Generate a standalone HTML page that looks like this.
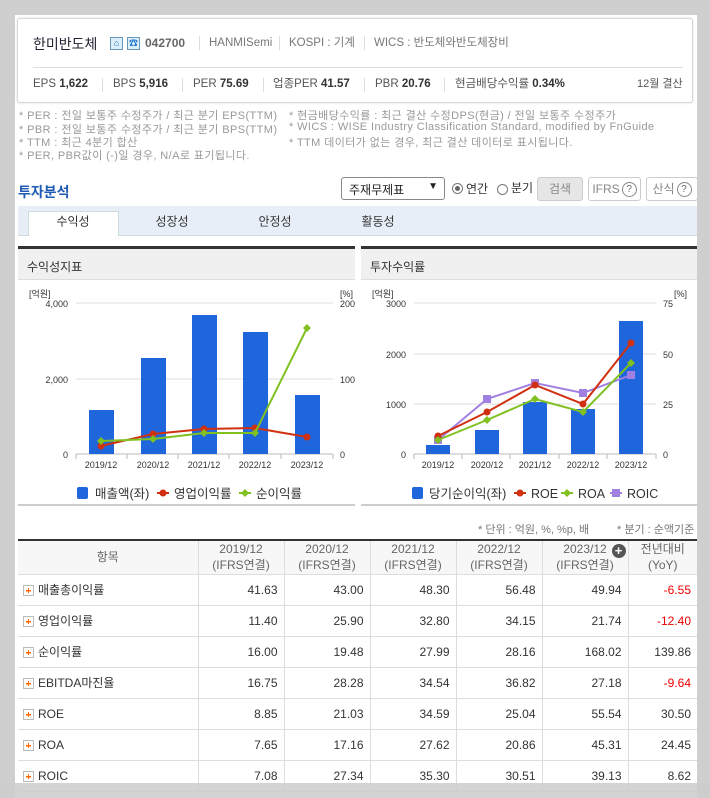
<!DOCTYPE html>
<html><head><meta charset="utf-8">
<style>
*{margin:0;padding:0;box-sizing:border-box}
body{width:710px;height:798px;background:#cfcfcf;font-family:"Liberation Sans","Noto Sans CJK KR",sans-serif;position:relative;overflow:hidden;color:#333}
.a{position:absolute;white-space:nowrap}
.wp{position:absolute;left:15px;top:15px;width:682px;height:783px;background:#fff}
.hdr{position:absolute;left:17px;top:18px;width:676px;height:85px;border:1px solid #d8d8d8;border-radius:3px;background:#fff;box-shadow:0 0 2px #ddd}
.g{color:#777;font-size:11.5px;line-height:14px}
.b{font-weight:bold;color:#333}
.sep{position:absolute;width:1px;height:14px;background:#ddd}
.note{position:absolute;font-size:11px;color:#999;white-space:nowrap;letter-spacing:0.4px}
.btn{position:absolute;top:177px;height:24px;border:1px solid #ccc;border-radius:3px;font-size:12px;color:#888;text-align:center;line-height:22px}
.q{display:inline-block;width:15px;height:15px;border:1px solid #888;border-radius:50%;font-size:10px;line-height:13px;color:#666;vertical-align:middle;margin-left:2px}
.tab{position:absolute;top:221px;font-size:12px;color:#333;transform:translate(-50%,-50%)}
.ph{position:absolute;top:246px;height:34px;background:#f0f0f0;border-top:3px solid #333;border-bottom:1px solid #ddd;font-size:12px;color:#333;padding:9px 0 0 9px}
table{position:absolute;left:18px;top:539px;width:679px;border-collapse:collapse;border-top:2px solid #333;font-size:12px}
td,th{border-right:1px solid #ddd;border-bottom:1px solid #ddd;height:31px}
th{background:#f7f7f7;font-weight:normal;color:#666;height:34px;line-height:16px;font-size:12px}
td{text-align:right;padding-right:6px;color:#333}
td.l{text-align:left;padding-left:5px}
.pl{display:inline-block;width:11px;height:11px;border:1px solid #bbb;vertical-align:middle;margin-right:4px;position:relative;background:#fff}
.pl:before{content:"";position:absolute;left:2px;top:4px;width:5px;height:1px;background:#f60;box-shadow:0 0.5px 0 #f60}
.pl:after{content:"";position:absolute;left:4px;top:2px;width:1px;height:5px;background:#f60}
.r{color:#e00}
</style></head><body>
<div class="wp"></div>
<div class="hdr"></div>
<div class="a" style="left:33px;top:34px;font-size:14px;color:#223">한미반도체</div>
<div class="a" style="left:110px;top:37px;width:13px;height:13px;border:1px solid #69b;background:#dbeefa;color:#27c;font-size:9px;text-align:center;line-height:11px">⌂</div>
<div class="a" style="left:127px;top:37px;width:13px;height:13px;border:1px solid #69b;background:#dbeefa;color:#27c;font-size:9px;text-align:center;line-height:11px">☎</div>
<div class="a" style="left:145px;top:36px;font-size:12px;font-weight:bold;color:#666">042700</div>
<div class="sep" style="left:199px;top:36px"></div>
<div class="a g" style="left:209px;top:36px">HANMISemi</div>
<div class="sep" style="left:279px;top:36px"></div>
<div class="a g" style="left:289px;top:36px">KOSPI : 기계</div>
<div class="sep" style="left:364px;top:36px"></div>
<div class="a g" style="left:374px;top:36px">WICS : 반도체와반도체장비</div>
<div class="a" style="left:33px;top:67px;width:650px;height:1px;background:#ddd"></div>
<div class="a" style="left:33px;top:77px;font-size:11.5px;color:#555;line-height:14px">EPS <span class="b">1,622</span></div>
<div class="sep" style="left:102px;top:78px"></div>
<div class="a" style="left:113px;top:77px;font-size:11.5px;color:#555;line-height:14px">BPS <span class="b">5,916</span></div>
<div class="sep" style="left:182px;top:78px"></div>
<div class="a" style="left:193px;top:77px;font-size:11.5px;color:#555;line-height:14px">PER <span class="b">75.69</span></div>
<div class="sep" style="left:263px;top:78px"></div>
<div class="a" style="left:273px;top:77px;font-size:11.5px;color:#555;line-height:14px">업종PER <span class="b">41.57</span></div>
<div class="sep" style="left:364px;top:78px"></div>
<div class="a" style="left:375px;top:77px;font-size:11.5px;color:#555;line-height:14px">PBR <span class="b">20.76</span></div>
<div class="sep" style="left:444px;top:78px"></div>
<div class="a" style="left:455px;top:77px;font-size:11.5px;color:#555;line-height:14px">현금배당수익률 <span class="b">0.34%</span></div>
<div class="a" style="left:637px;top:77px;font-size:11px;color:#555;line-height:14px">12월 결산</div>

<div class="note" style="left:19px;top:107px">* PER : 전일 보통주 수정주가 / 최근 분기 EPS(TTM)</div>
<div class="note" style="left:19px;top:121px">* PBR : 전일 보통주 수정주가 / 최근 분기 BPS(TTM)</div>
<div class="note" style="left:19px;top:134px">* TTM : 최근 4분기 합산</div>
<div class="note" style="left:19px;top:147px">* PER, PBR값이 (-)일 경우, N/A로 표기됩니다.</div>
<div class="note" style="left:289px;top:107px">* 현금배당수익률 : 최근 결산 수정DPS(현금) / 전일 보통주 수정주가</div>
<div class="note" style="left:289px;top:121px">* WICS : WISE Industry Classification Standard, modified by FnGuide</div>
<div class="note" style="left:289px;top:134px">* TTM 데이터가 없는 경우, 최근 결산 데이터로 표시됩니다.</div>

<div class="a" style="left:18px;top:182px;font-size:14px;font-weight:bold;color:#1f5bb5">투자분석</div>
<div class="a" style="left:341px;top:177px;width:104px;height:23px;border:1px solid #888;border-radius:3px;font-size:12px;padding:3px 7px;color:#222">주재무제표<span style="position:absolute;right:6px;top:3px;font-size:10px">▼</span></div>
<div class="a" style="left:452px;top:183px;width:11px;height:11px;border:1px solid #777;border-radius:50%"><div style="margin:2px;width:5px;height:5px;border-radius:50%;background:#666"></div></div>
<div class="a" style="left:466px;top:180px;font-size:12px">연간</div>
<div class="a" style="left:497px;top:184px;width:11px;height:11px;border:1px solid #777;border-radius:50%"></div>
<div class="a" style="left:511px;top:179px;font-size:12px">분기</div>
<div class="btn" style="left:537px;width:46px;background:#e6e6e6">검색</div>
<div class="btn" style="left:588px;width:53px">IFRS<span class="q">?</span></div>
<div class="btn" style="left:646px;width:52px">산식<span class="q">?</span></div>

<div class="a" style="left:18px;top:206px;width:679px;height:30px;background:#e8eef8;border-bottom:1px solid #cdd"></div>
<div class="a" style="left:28px;top:211px;width:91px;height:25px;background:#fff;border:1px solid #cdd;border-bottom:none"></div>
<div class="tab" style="left:73px">수익성</div>
<div class="tab" style="left:172px">성장성</div>
<div class="tab" style="left:275px">안정성</div>
<div class="tab" style="left:378px">활동성</div>

<div class="ph" style="left:18px;width:337px">수익성지표</div>
<div class="ph" style="left:361px;width:336px">투자수익률</div>
<div class="a" style="left:18px;top:504px;width:337px;height:2px;background:#ccc"></div>
<div class="a" style="left:361px;top:504px;width:336px;height:2px;background:#ccc"></div>

<svg class="a" style="left:0;top:280px" width="710" height="225" font-family="Liberation Sans" font-size="9" fill="#333">
<g transform="translate(0,-280)">
<text x="29" y="297">[억원]</text><text x="340" y="297">[%]</text>
<g stroke="#ddd"><line x1="76" y1="303" x2="333" y2="303"/><line x1="76" y1="379" x2="333" y2="379"/></g>
<line x1="76" y1="454" x2="333" y2="454" stroke="#bbb"/>
<g stroke="#bbb"><line x1="76" y1="454" x2="76" y2="459"/><line x1="127" y1="454" x2="127" y2="459"/><line x1="178" y1="454" x2="178" y2="459"/><line x1="229" y1="454" x2="229" y2="459"/><line x1="281" y1="454" x2="281" y2="459"/><line x1="333" y1="454" x2="333" y2="459"/></g>
<g text-anchor="end"><text x="68" y="307">4,000</text><text x="68" y="383">2,000</text><text x="68" y="458">0</text></g>
<text x="340" y="307">200</text><text x="340" y="383">100</text><text x="340" y="458">0</text>
<g fill="#1f66dd"><rect x="89" y="410" width="25" height="44"/><rect x="141" y="358" width="25" height="96"/><rect x="192" y="315" width="25" height="139"/><rect x="243" y="332" width="25" height="122"/><rect x="295" y="395" width="25" height="59"/></g>
<g text-anchor="middle"><text x="101" y="468">2019/12</text><text x="153" y="468">2020/12</text><text x="204" y="468">2021/12</text><text x="255" y="468">2022/12</text><text x="307" y="468">2023/12</text></g>
<polyline points="101,446 153,434 204,429 255,428 307,437" fill="none" stroke="#d03010" stroke-width="2"/>
<g fill="#d03010"><circle cx="101" cy="446" r="3.5"/><circle cx="153" cy="434" r="3.5"/><circle cx="204" cy="429" r="3.5"/><circle cx="255" cy="428" r="3.5"/><circle cx="307" cy="437" r="3.5"/></g>
<polyline points="101,441 153,439 204,433 255,433 307,328" fill="none" stroke="#80c020" stroke-width="2"/>
<g fill="#80c020"><path d="M101 437l4 4-4 4-4-4z"/><path d="M153 435l4 4-4 4-4-4z"/><path d="M204 429l4 4-4 4-4-4z"/><path d="M255 429l4 4-4 4-4-4z"/><path d="M307 324l4 4-4 4-4-4z"/></g>
<g font-size="12.5"><rect x="77" y="487" width="11" height="12" rx="2" fill="#1f66dd"/><text x="95" y="498">매출액(좌)</text>
<line x1="157" y1="493" x2="169" y2="493" stroke="#d03010" stroke-width="2"/><circle cx="163" cy="493" r="3.5" fill="#d03010"/><text x="174" y="498">영업이익률</text>
<line x1="239" y1="493" x2="251" y2="493" stroke="#80c020" stroke-width="2"/><path d="M245 489l4 4-4 4-4-4z" fill="#80c020"/><text x="256" y="498">순이익률</text></g>

<text x="372" y="297">[억원]</text><text x="674" y="297">[%]</text>
<g stroke="#ddd"><line x1="414" y1="303" x2="656" y2="303"/><line x1="414" y1="354" x2="656" y2="354"/><line x1="414" y1="404" x2="656" y2="404"/></g>
<line x1="414" y1="454" x2="656" y2="454" stroke="#bbb"/>
<g stroke="#bbb"><line x1="414" y1="454" x2="414" y2="459"/><line x1="462" y1="454" x2="462" y2="459"/><line x1="510" y1="454" x2="510" y2="459"/><line x1="559" y1="454" x2="559" y2="459"/><line x1="607" y1="454" x2="607" y2="459"/><line x1="656" y1="454" x2="656" y2="459"/></g>
<g text-anchor="end"><text x="406" y="307">3000</text><text x="406" y="358">2000</text><text x="406" y="408">1000</text><text x="406" y="458">0</text></g>
<text x="663" y="307">75</text><text x="663" y="358">50</text><text x="663" y="408">25</text><text x="663" y="458">0</text>
<g fill="#1f66dd"><rect x="426" y="445" width="24" height="9"/><rect x="475" y="430" width="24" height="24"/><rect x="523" y="402" width="24" height="52"/><rect x="571" y="409" width="24" height="45"/><rect x="619" y="321" width="24" height="133"/></g>
<g text-anchor="middle"><text x="438" y="468">2019/12</text><text x="487" y="468">2020/12</text><text x="535" y="468">2021/12</text><text x="583" y="468">2022/12</text><text x="631" y="468">2023/12</text></g>
<polyline points="438,440 487,399 535,383 583,393 631,375" fill="none" stroke="#a080e0" stroke-width="2"/>
<g fill="#a080e0"><rect x="434" y="436" width="8" height="8"/><rect x="483" y="395" width="8" height="8"/><rect x="531" y="379" width="8" height="8"/><rect x="579" y="389" width="8" height="8"/><rect x="627" y="371" width="8" height="8"/></g>
<polyline points="438,436 487,412 535,385 583,404 631,343" fill="none" stroke="#d03010" stroke-width="2"/>
<g fill="#d03010"><circle cx="438" cy="436" r="3.5"/><circle cx="487" cy="412" r="3.5"/><circle cx="535" cy="385" r="3.5"/><circle cx="583" cy="404" r="3.5"/><circle cx="631" cy="343" r="3.5"/></g>
<polyline points="438,440 487,420 535,399 583,412 631,363" fill="none" stroke="#80c020" stroke-width="2"/>
<g fill="#80c020"><path d="M438 436l4 4-4 4-4-4z"/><path d="M487 416l4 4-4 4-4-4z"/><path d="M535 395l4 4-4 4-4-4z"/><path d="M583 408l4 4-4 4-4-4z"/><path d="M631 359l4 4-4 4-4-4z"/></g>
<g font-size="12.5"><rect x="412" y="487" width="11" height="12" rx="2" fill="#1f66dd"/><text x="429" y="498">당기순이익(좌)</text>
<line x1="514" y1="493" x2="526" y2="493" stroke="#d03010" stroke-width="2"/><circle cx="520" cy="493" r="3.5" fill="#d03010"/><text x="531" y="498">ROE</text>
<line x1="561" y1="493" x2="573" y2="493" stroke="#80c020" stroke-width="2"/><path d="M567 489l4 4-4 4-4-4z" fill="#80c020"/><text x="578" y="498">ROA</text>
<line x1="610" y1="493" x2="622" y2="493" stroke="#a080e0" stroke-width="2"/><rect x="612" y="489" width="8" height="8" fill="#a080e0"/><text x="627" y="498">ROIC</text></g>
</g></svg>

<div class="note" style="left:478px;top:521px;color:#777;letter-spacing:0">* 단위 : 억원, %, %p, 배</div>
<div class="note" style="left:617px;top:521px;color:#777;letter-spacing:0">* 분기 : 순액기준</div>

<table>
<colgroup><col style="width:180px"><col style="width:86px"><col style="width:86px"><col style="width:86px"><col style="width:86px"><col style="width:86px"><col style="width:69px"></colgroup>
<tr><th>항목</th><th>2019/12<br>(IFRS연결)</th><th>2020/12<br>(IFRS연결)</th><th>2021/12<br>(IFRS연결)</th><th>2022/12<br>(IFRS연결)</th><th style="position:relative">2023/12<br>(IFRS연결)<span style="position:absolute;right:2px;top:3px;width:14px;height:14px;border-radius:50%;background:#555;color:#fff;font-size:13px;line-height:14px;font-weight:bold">+</span></th><th style="border-right:none">전년대비<br>(YoY)</th></tr>
<tr><td class="l"><span class="pl"></span>매출총이익률</td><td>41.63</td><td>43.00</td><td>48.30</td><td>56.48</td><td>49.94</td><td class="r" style="border-right:none">-6.55</td></tr>
<tr><td class="l"><span class="pl"></span>영업이익률</td><td>11.40</td><td>25.90</td><td>32.80</td><td>34.15</td><td>21.74</td><td class="r" style="border-right:none">-12.40</td></tr>
<tr><td class="l"><span class="pl"></span>순이익률</td><td>16.00</td><td>19.48</td><td>27.99</td><td>28.16</td><td>168.02</td><td style="border-right:none">139.86</td></tr>
<tr><td class="l"><span class="pl"></span>EBITDA마진율</td><td>16.75</td><td>28.28</td><td>34.54</td><td>36.82</td><td>27.18</td><td class="r" style="border-right:none">-9.64</td></tr>
<tr><td class="l"><span class="pl"></span>ROE</td><td>8.85</td><td>21.03</td><td>34.59</td><td>25.04</td><td>55.54</td><td style="border-right:none">30.50</td></tr>
<tr><td class="l"><span class="pl"></span>ROA</td><td>7.65</td><td>17.16</td><td>27.62</td><td>20.86</td><td>45.31</td><td style="border-right:none">24.45</td></tr>
<tr><td class="l"><span class="pl"></span>ROIC</td><td>7.08</td><td>27.34</td><td>35.30</td><td>30.51</td><td>39.13</td><td style="border-right:none">8.62</td></tr>
</table>
<div class="a" style="left:0;top:783px;width:710px;height:15px;background:rgba(205,205,205,0.88)"></div>
</body></html>
